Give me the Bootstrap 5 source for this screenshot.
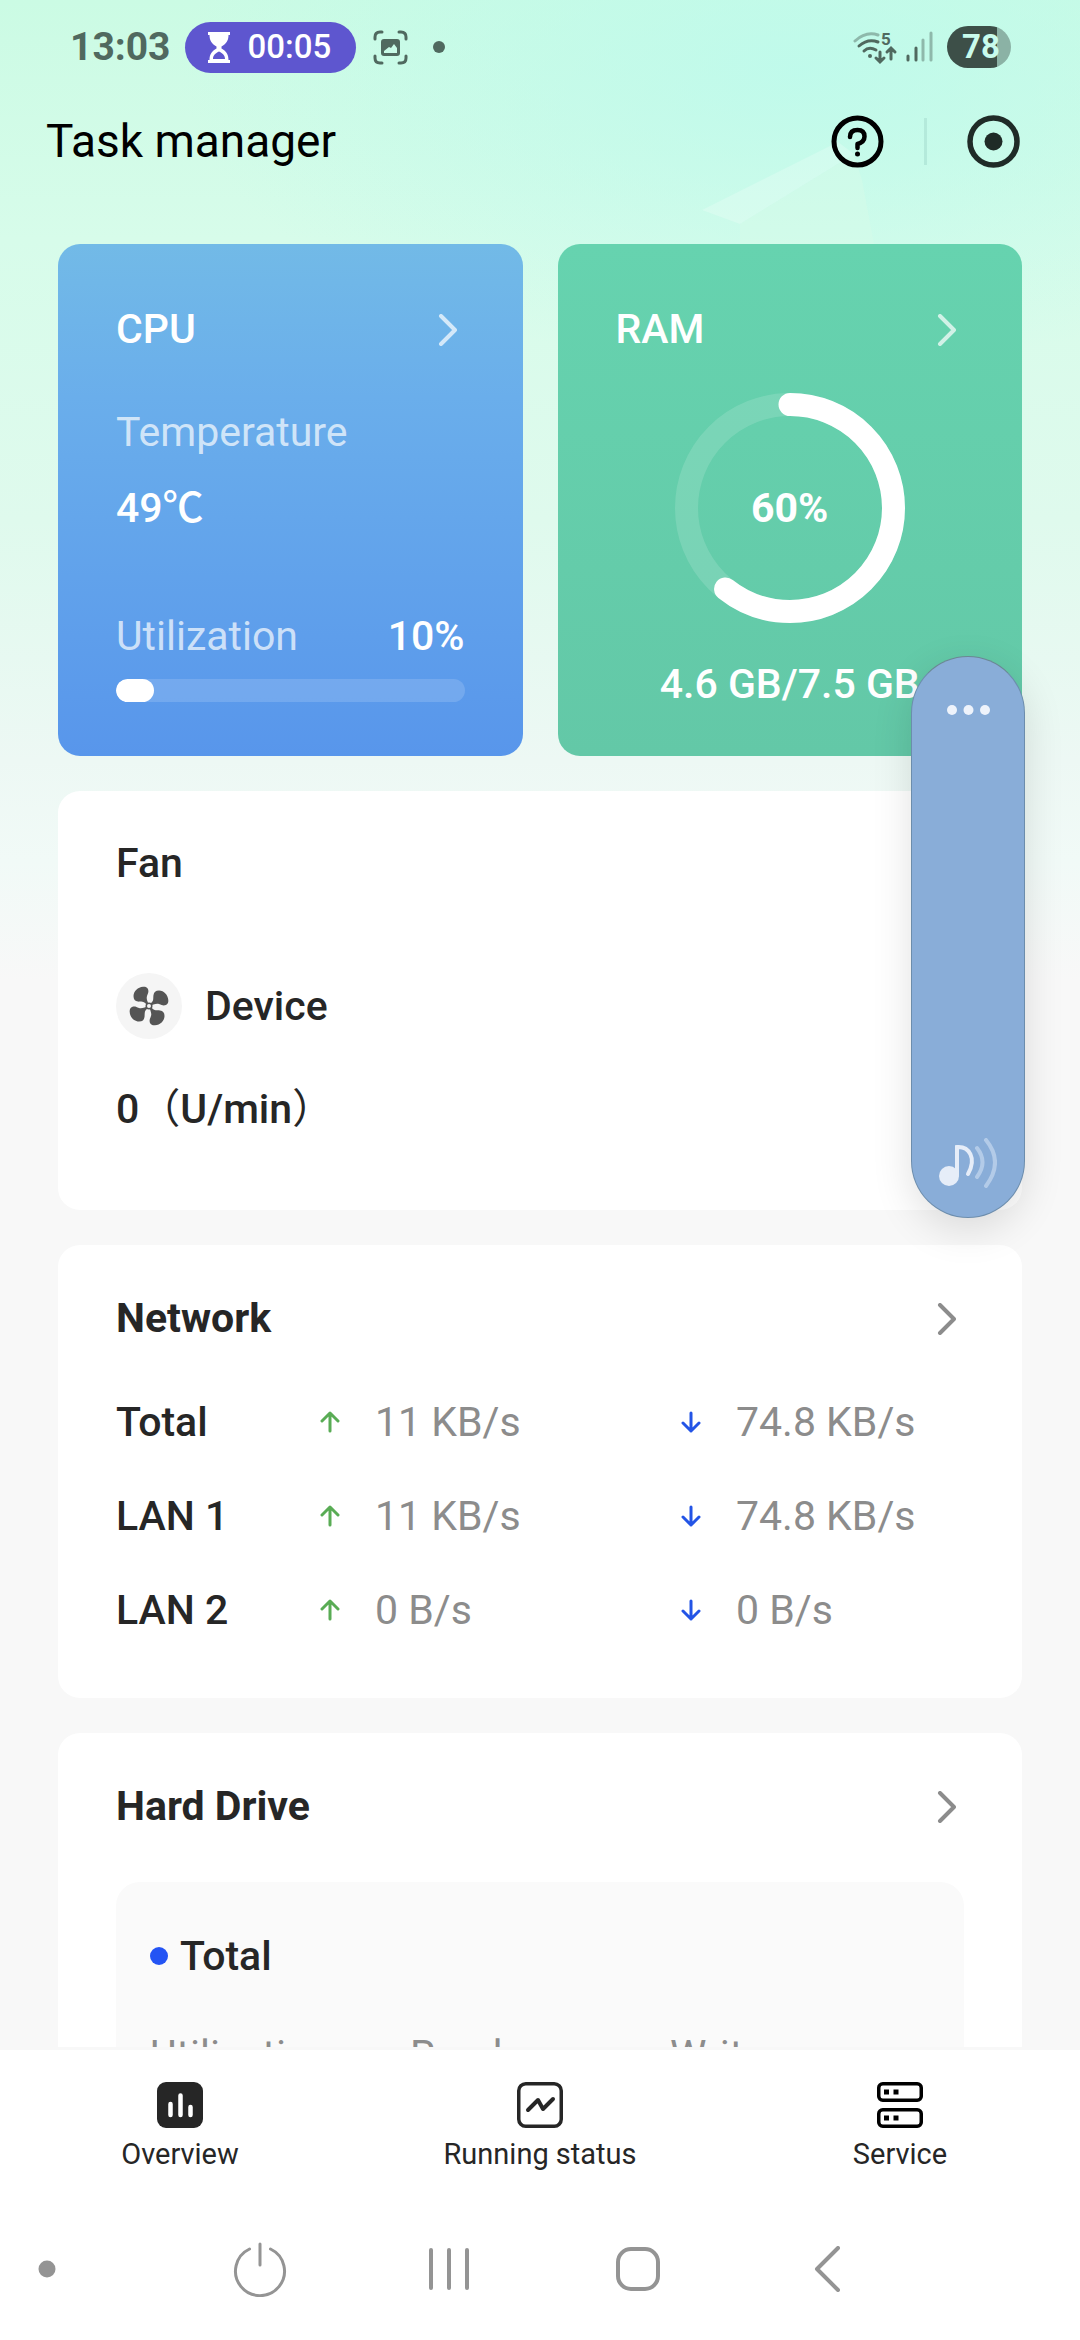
<!DOCTYPE html>
<html lang="en">
<head>
<meta charset="utf-8">
<meta name="viewport" content="width=device-width, initial-scale=1">
<title>Task manager</title>
<link href="https://cdn.jsdelivr.net/npm/bootstrap@5.3.0/dist/css/bootstrap.min.css" rel="stylesheet">
<style>
  :root { --ink: #262626; --muted: #8c8c8c; --page: #f8f8f8; }
  body { font-family: Roboto, "Noto Sans CJK SC", sans-serif; font-size: 41px; line-height: 48px; color: var(--ink); background: var(--page); }
  svg { display: block; flex: none; }
  .screen {
    background:
      radial-gradient(ellipse 620px 300px at 800px 70px, rgba(188,250,236,.8), rgba(188,250,236,0)),
      linear-gradient(180deg, #cbfbe4 0, #d7fcea 240px, #dffaed 520px, #edf8f4 760px, #f1faf7 860px, #f8f8f8 980px);
  }
  .backdrop { top: 130px; right: 205px; z-index: 0; }
  .layer { z-index: 1; }
  .fw-500 { font-weight: 500; }

  .status { height: 94px; padding: 0 69px 0 70px; color: #50695f; }
  .clock { font-size: 39px; font-weight: 700; margin-right: 14px; }
  .timer-pill { height: 51px; padding: 0 25px 0 23px; gap: 18px; margin-right: 17px; background: #5e56cf; color: #fff; font-size: 33px; font-weight: 500; }
  .shot { margin-right: 25px; }
  .battery { width: 64px; height: 42px; padding-left: 4px; font-size: 33px; font-weight: 700; line-height: 42px; color: #c8fbec; background: linear-gradient(90deg, #3d4f48 78%, #8bb2a5 78%); }

  .appbar { height: 94px; padding: 0 60px 0 46px; }
  .appbar h1 { font-size: 46px; line-height: 54px; font-weight: 400; color: #000; }
  .appbar-actions { gap: 40px; }
  .rule { width: 3px; height: 47px; background: #b4eadb; }
  .plain { background: none; border: 0; padding: 0; color: inherit; }

  .feed { padding: 56px 58px 0; min-height: 0; scrollbar-width: none; }
  .feed::-webkit-scrollbar { display: none; }
  .stack { gap: 35px; }
  .tile { border: 0; border-radius: 22px; padding: 49px 58px 42px; color: inherit; }
  .tile h2 { font-size: 41px; line-height: 48px; margin: 0; font-weight: 700; }
  .go { color: var(--muted); padding: 2px 8px 0 0; }
  .tile-cpu, .tile-ram { flex: 1 1 0; color: #fff; padding-top: 61px; }
  .tile-cpu h2, .tile-ram h2, .tile-fan h2 { font-weight: 500; }
  .tile-cpu { background: linear-gradient(180deg, #72bae7, #6aaeeb 30%, #5896eb); padding-bottom: 54px; }
  .tile-ram { background: linear-gradient(180deg, #66d3af, #63c8a7); padding-bottom: 47px; }
  .tile-cpu .go, .tile-ram .go { color: rgba(255,255,255,.7); }
  .soft { color: rgba(255,255,255,.7); }
  .temp-label { margin-top: 55px; }
  .temp-value { margin: 28px 0 80px; }
  .meter { --bs-progress-height: 23px; --bs-progress-bg: rgba(255,255,255,.15); --bs-progress-border-radius: 12px; --bs-progress-bar-bg: #fff; margin-top: 19px; }
  .meter .progress-bar { border-radius: 12px; }
  .ring { margin: 40px 0 37px; display: grid; place-items: center; }
  .ring > * { grid-area: 1 / 1; }

  .tile-fan { padding-top: 48px; padding-bottom: 77px; }
  .device { margin: 86px 0 46px; gap: 23px; }
  .fan-disc { width: 66px; height: 66px; background: #f5f5f5; }

  .net { margin-top: 33px; margin-bottom: -1px; table-layout: fixed; }
  .net th, .net td { padding: 23px 0; font-weight: 500; }
  .net td { color: var(--muted); font-weight: 400; }
  .net .c1 { width: 204px; } .net .c2 { width: 361px; }
  .rate { gap: 35px; }
  .up { color: #59ac55; } .down { color: #2354e6; }

  .drive { margin-top: 52px; padding: 50px 34px; background: #fafafa; border-radius: 24px; }
  .drive-name { gap: 12px; margin-bottom: 51px; }
  .drive-dot { width: 18px; height: 18px; background: #2454f4; }
  .muted { color: var(--muted); }

  .tabs { border-top: 3px solid #f8f8f8; padding: 32px 0 26px; background: #fff; font-size: 29px; line-height: 36px; }
  .tabs a { gap: 8px; color: var(--ink); }
  .sysnav { background: #fff; height: 142px; color: #949494; }
  .sysnav .lead-cell { width: 165px; padding-left: 38px; }
  .sysnav button { width: 18%; max-width: 189px; }

  .volume { top: 656px; right: 55px; width: 114px; height: 562px; z-index: 5; padding: 48px 0 29px; border: 1px solid rgba(80,110,130,.5); border-top-color: #6b8794; background: #89add8; color: #eef3fb; box-shadow: 0 12px 40px rgba(0,0,0,.12); }
  .volume input { appearance: none; writing-mode: vertical-lr; background: transparent; width: 60px; min-height: 0; margin: 0; flex: 1; }
  .volume input::-webkit-slider-thumb { appearance: none; width: 1px; height: 1px; }
</style>
</head>
<body>
<div class="screen vh-100 d-flex flex-column position-relative overflow-hidden">

  <svg class="backdrop position-absolute" width="175" height="114" viewBox="0 0 175 114" aria-hidden="true">
    <path d="M2 80 138 12 154 24 40 94Z" fill="#fff" opacity=".22"/>
    <path d="M40 94 154 24 162 50 174 114H40Z" fill="#d8fbe8" opacity=".45"/>
  </svg>

  <header class="layer position-relative flex-shrink-0">
    <div class="status d-flex align-items-center">
      <span class="clock">13:03</span>
      <span class="timer-pill rounded-pill d-flex align-items-center">
        <svg width="22" height="31" viewBox="0 0 22 31" fill="#fff"><path d="M0 0H22V3H20.500C20.500 9 18 12 13.500 14.500V16.500C18 19 20.500 22 20.500 28H22V31H0V28H1.500C1.500 22 4 19 8.500 16.500V14.500C4 12 1.500 9 1.500 3H0ZM5 27H17C17 23 14 21 11 19.500 8 21 5 23 5 27Z" fill-rule="evenodd"/></svg>
        00:05
      </span>
      <svg class="shot" width="35" height="35" viewBox="0 0 35 35" fill="none" stroke="currentColor" stroke-width="3" stroke-linecap="round"><path d="M2 9V7Q2 2 7 2H9M26 2H28Q33 2 33 7V9M33 26V28Q33 33 28 33H26M9 33H7Q2 33 2 28V26"/><path d="M11 9H24Q27 9 27 12V23Q27 26 24 26H11Q8 26 8 23V12Q8 9 11 9ZM11 23H24V18L21 14 18 18 16 17 11 21Z" fill="currentColor" fill-rule="evenodd" stroke="none"/></svg>
      <svg width="12" height="12"><circle cx="6" cy="6" r="6" fill="currentColor"/></svg>
      <span class="ms-auto d-flex align-items-center">
        <svg width="94" height="40" viewBox="0 -4 94 40" fill="none" stroke="currentColor" stroke-width="3" stroke-linecap="round">
          <path d="M2 10Q13 0 25 4" opacity=".45"/><path d="M6 15Q15 7 25 11M11 20Q16 15 23 19"/><circle cx="17" cy="25" r="2" fill="currentColor" stroke="none"/>
          <path d="M27 21V30M23 27 27 31 31 27M38 28V18M34 21 38 17 42 21"/>
          <path d="M55 25V29M63 17V29"/><path d="M70 9V29M78 2V29" opacity=".45"/>
          <text x="28" y="14" font-family="Roboto" font-weight="700" font-size="17" fill="currentColor" stroke="none">5</text>
        </svg>
        <span class="battery rounded-pill text-center">78</span>
      </span>
    </div>
    <div class="appbar d-flex align-items-center justify-content-between">
      <h1 class="m-0">Task manager</h1>
      <div class="appbar-actions d-flex align-items-center">
        <button class="plain" type="button" aria-label="Help">
          <svg width="53" height="53" viewBox="0 0 53 53" fill="none" stroke="#000" stroke-width="5" stroke-linecap="round" stroke-linejoin="round"><circle cx="26.500" cy="26.500" r="23.500"/><path d="M19 22Q19 15 26.500 15 33.500 15 33.500 21.500 33.500 27 26.500 29V33" stroke-width="4.500"/><circle cx="26.500" cy="39" r="2.500" fill="#000" stroke="none"/></svg>
        </button>
        <span class="rule"></span>
        <button class="plain" type="button" aria-label="Record">
          <svg width="53" height="53" viewBox="0 0 53 53"><circle cx="26.500" cy="26.500" r="23.500" fill="none" stroke="#1f2b27" stroke-width="5.500"/><circle cx="26.500" cy="26.500" r="9" fill="#1f2b27"/></svg>
        </button>
      </div>
    </div>
  </header>

  <main class="feed layer position-relative flex-grow-1 overflow-auto">
    <div class="stack d-flex flex-column">
      <div class="stack d-flex">
        <section class="card tile tile-cpu">
          <div class="d-flex justify-content-between align-items-center">
            <h2>CPU</h2>
            <a class="go" href="#cpu" aria-label="CPU details"><svg width="19" height="32" viewBox="0 0 19 32" fill="none" stroke="currentColor" stroke-width="4" stroke-linecap="round" stroke-linejoin="round"><path d="M3 2 17 16 3 30"/></svg></a>
          </div>
          <div class="temp-label soft">Temperature</div>
          <div class="temp-value fw-500">49℃</div>
          <div class="d-flex justify-content-between"><span class="soft">Utilization</span><span class="fw-500">10%</span></div>
          <div class="meter progress" role="progressbar" aria-label="CPU utilization" aria-valuenow="10" aria-valuemin="0" aria-valuemax="100"><div class="progress-bar" style="width: 11%"></div></div>
        </section>
        <section class="card tile tile-ram">
          <div class="d-flex justify-content-between align-items-center">
            <h2>RAM</h2>
            <a class="go" href="#ram" aria-label="RAM details"><svg width="19" height="32" viewBox="0 0 19 32" fill="none" stroke="currentColor" stroke-width="4" stroke-linecap="round" stroke-linejoin="round"><path d="M3 2 17 16 3 30"/></svg></a>
          </div>
          <div class="ring">
            <svg width="230" height="230" viewBox="0 0 230 230" fill="none" stroke="#fff" stroke-width="23"><circle cx="115" cy="115" r="103.500" opacity=".14"/><circle cx="115" cy="115" r="103.500" pathLength="100" stroke-dasharray="60.700 100" stroke-linecap="round" transform="rotate(-90 115 115)"/></svg>
            <span class="fw-bold">60%</span>
          </div>
          <div class="text-center text-nowrap fw-500">4.6 GB/7.5 GB</div>
        </section>
      </div>

      <section class="card tile tile-fan">
        <h2>Fan</h2>
        <div class="device d-flex align-items-center fw-500">
          <span class="fan-disc rounded-circle d-flex align-items-center justify-content-center">
            <svg width="40" height="40" viewBox="-20 -20 40 40" fill="#555"><path id="blade" d="M0 0C-1-4-3-7-2-10-1-13 0-14-1-17-2-19-4-19.500-6-19.300-11-19-15.500-15-15.500-10-15.500-6.500-14-5-11-4.500-8-4-5-5-3-2Z"/><use href="#blade" transform="rotate(90)"/><use href="#blade" transform="rotate(180)"/><use href="#blade" transform="rotate(270)"/><circle r="3.500"/><circle r="2" fill="#f5f5f5"/></svg>
          </span>
          Device
        </div>
        <div class="fw-500">0<span class="fw-normal">（</span>U/min<span class="fw-normal">）</span></div>
      </section>

      <section class="card tile">
        <div class="d-flex justify-content-between align-items-center">
          <h2>Network</h2>
          <a class="go" href="#network" aria-label="Network details"><svg width="19" height="32" viewBox="0 0 19 32" fill="none" stroke="currentColor" stroke-width="4" stroke-linecap="round" stroke-linejoin="round"><path d="M3 2 17 16 3 30"/></svg></a>
        </div>
        <svg class="d-none"><defs><path id="arrow" d="M10 20V2M2 10 10 2 18 10" fill="none" stroke="currentColor" stroke-width="3" stroke-linecap="round" stroke-linejoin="round"/></defs></svg>
        <table class="net w-100">
          <colgroup><col class="c1"><col class="c2"><col></colgroup>
          <tbody>
            <tr>
              <th scope="row">Total</th>
              <td><span class="rate d-flex align-items-center"><svg class="up" width="20" height="22"><use href="#arrow"/></svg>11 KB/s</span></td>
              <td><span class="rate d-flex align-items-center"><svg class="down" width="20" height="22"><use href="#arrow" transform="rotate(180 10 11)"/></svg>74.8 KB/s</span></td>
            </tr>
            <tr>
              <th scope="row">LAN 1</th>
              <td><span class="rate d-flex align-items-center"><svg class="up" width="20" height="22"><use href="#arrow"/></svg>11 KB/s</span></td>
              <td><span class="rate d-flex align-items-center"><svg class="down" width="20" height="22"><use href="#arrow" transform="rotate(180 10 11)"/></svg>74.8 KB/s</span></td>
            </tr>
            <tr>
              <th scope="row">LAN 2</th>
              <td><span class="rate d-flex align-items-center"><svg class="up" width="20" height="22"><use href="#arrow"/></svg>0 B/s</span></td>
              <td><span class="rate d-flex align-items-center"><svg class="down" width="20" height="22"><use href="#arrow" transform="rotate(180 10 11)"/></svg>0 B/s</span></td>
            </tr>
          </tbody>
        </table>
      </section>

      <section class="card tile">
        <div class="d-flex justify-content-between align-items-center">
          <h2>Hard Drive</h2>
          <a class="go" href="#drive" aria-label="Hard drive details"><svg width="19" height="32" viewBox="0 0 19 32" fill="none" stroke="currentColor" stroke-width="4" stroke-linecap="round" stroke-linejoin="round"><path d="M3 2 17 16 3 30"/></svg></a>
        </div>
        <div class="drive">
          <div class="drive-name d-flex align-items-center fw-500"><span class="drive-dot rounded-circle"></span>Total</div>
          <div class="row row-cols-3 g-0 muted"><div class="col">Utilization</div><div class="col">Read</div><div class="col">Write</div></div>
        </div>
      </section>
    </div>
  </main>

  <nav class="tabs layer position-relative flex-shrink-0 d-flex text-center" aria-label="Sections">
    <a class="col d-flex flex-column align-items-center text-decoration-none" href="#overview">
      <svg width="46" height="46" viewBox="0 0 46 46"><rect width="46" height="46" rx="9" fill="#262626"/><path d="M13.500 22V33M23.500 13.500V33M33.500 25V33" stroke="#fff" stroke-width="4.500" stroke-linecap="round"/></svg>
      Overview
    </a>
    <a class="col d-flex flex-column align-items-center text-decoration-none" href="#status">
      <svg width="46" height="46" viewBox="0 0 46 46" fill="none" stroke="#262626" stroke-linecap="round" stroke-linejoin="round"><rect x="1.750" y="1.750" width="42.500" height="42.500" rx="7" stroke-width="3.500"/><path d="M11 28 21 18 26 27 36 17" stroke-width="4"/></svg>
      Running status
    </a>
    <a class="col d-flex flex-column align-items-center text-decoration-none" href="#service">
      <svg width="46" height="46" viewBox="0 0 46 46" fill="none" stroke="#000" stroke-width="3.500"><rect x="1.750" y="1.750" width="42.500" height="16.500" rx="4"/><rect x="1.750" y="27.750" width="42.500" height="16.500" rx="4"/><path d="M7 10h5M16.500 10h5M7 36h5M16.500 36h5" stroke-width="5"/></svg>
      Service
    </a>
  </nav>

  <nav class="sysnav layer position-relative flex-shrink-0 d-flex align-items-center" aria-label="System">
    <span class="lead-cell"><svg width="18" height="18"><circle cx="9" cy="9" r="8.500" fill="currentColor"/></svg></span>
    <button class="plain d-flex justify-content-center" type="button" aria-label="Power"><svg width="54" height="56" viewBox="0 0 54 56" fill="none" stroke="currentColor" stroke-width="3" stroke-linecap="round"><path d="M16.500 8A24.500 24.500 0 1 0 37.500 8M27 3V24"/></svg></button>
    <button class="plain d-flex justify-content-center" type="button" aria-label="Recent apps"><svg width="42" height="44" viewBox="0 0 42 44" stroke="currentColor" stroke-width="4" stroke-linecap="round"><path d="M3 3V41M21 3V41M39 3V41"/></svg></button>
    <button class="plain d-flex justify-content-center" type="button" aria-label="Home"><svg width="44" height="44" viewBox="0 0 44 44" fill="none" stroke="currentColor" stroke-width="4"><rect x="2" y="2" width="40" height="40" rx="13"/></svg></button>
    <button class="plain d-flex justify-content-center" type="button" aria-label="Back"><svg width="26" height="46" viewBox="0 0 26 46" fill="none" stroke="currentColor" stroke-width="4" stroke-linecap="round" stroke-linejoin="round"><path d="M24 2 3 23 24 44"/></svg></button>
  </nav>

  <div class="volume rounded-pill position-absolute d-flex flex-column align-items-center">
    <button class="plain" type="button" aria-label="More sound settings"><svg width="43" height="10"><g fill="currentColor"><circle cx="5" cy="5" r="5"/><circle cx="21.500" cy="5" r="5"/><circle cx="38" cy="5" r="5"/></g></svg></button>
    <input type="range" min="0" max="100" value="0" aria-label="Media volume">
    <svg width="58" height="50" viewBox="0 0 58 50" fill="none" stroke="#e6edf8" stroke-width="4" stroke-linecap="round"><ellipse cx="10" cy="38" rx="10" ry="10" fill="#e6edf8" stroke="none"/><path d="M18 37V9C30 8 38 20 29 36"/><path d="M38 10Q49 24 38 39M47 2Q65 24 47 48" stroke="#b3cbe8"/></svg>
  </div>
</div>
<script src="https://cdn.jsdelivr.net/npm/bootstrap@5.3.0/dist/js/bootstrap.bundle.min.js"></script>
</body>
</html>
